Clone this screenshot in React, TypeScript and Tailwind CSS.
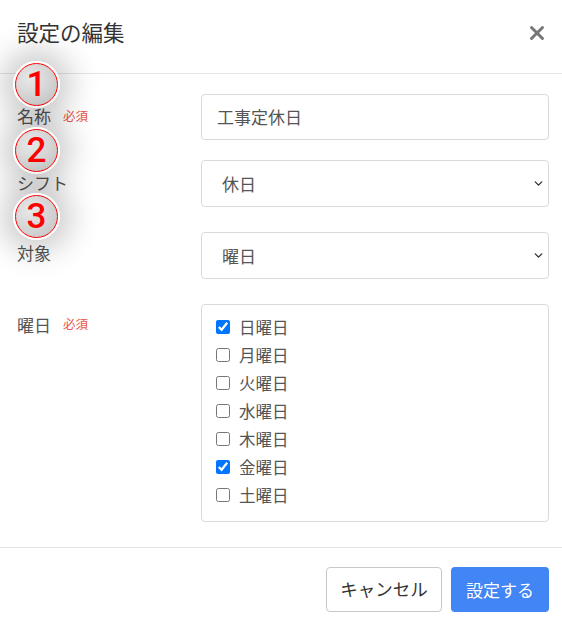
import { ChevronDown, X } from 'lucide-react'

const days = [
  { label: '日曜日', checked: true },
  { label: '月曜日', checked: false },
  { label: '火曜日', checked: false },
  { label: '水曜日', checked: false },
  { label: '木曜日', checked: false },
  { label: '金曜日', checked: true },
  { label: '土曜日', checked: false },
]

const font = { fontFamily: '"Noto Sans CJK JP", "Noto Sans", sans-serif' }

function Marker({ n, top }: { n: number; top: number }) {
  return (
    <div
      className="absolute left-[13px] w-[47px] h-[47px] rounded-full border-2 border-white shadow-[0_0_30px_12px_rgba(0,0,0,0.2)]"
      style={{ top }}
    >
      <div className="w-full h-full rounded-full border-[1.5px] border-[#ff0000] bg-[radial-gradient(circle_at_35%_35%,#e8e8e8,#c2c2c2)] flex items-center justify-center">
        <span className="text-[#ff0000] text-[35px] font-medium leading-none" style={{ fontFamily: 'Roboto, "Liberation Sans", sans-serif' }}>
          {n}
        </span>
      </div>
    </div>
  )
}

function Required() {
  return <span className="ml-[12px] text-[12.5px] text-[#e8534b]">必須</span>
}

export default function App() {
  return (
    <div className="relative w-[562px] h-[627px] bg-white" style={font}>
      {/* Header */}
      <div className="h-[74px] border-b border-[#e5e5e5] flex items-center justify-between pl-[17px] pr-[14px] pb-[8px]">
        <h1 className="text-[21.5px] text-[#333]">設定の編集</h1>
        <X className="w-[22px] h-[22px] text-[#777]" strokeWidth={3.2} />
      </div>

      {/* Body */}
      <div className="pl-[17px] pr-[13px] pt-[20px] pb-[25px] text-[17px] text-[#555]">
        <div className="flex items-center h-[46px]">
          <div className="w-[184px] flex items-center mt-[-2px]">
            名称<Required />
          </div>
          <div className="flex-1 h-full border border-[#d6dbe0] rounded-[4px] flex items-center px-[15px]">
            工事定休日
          </div>
        </div>

        <div className="flex items-center h-[47px] mt-[20px]">
          <div className="w-[184px] mt-[-2px]">シフト</div>
          <div className="flex-1 h-full border border-[#d6dbe0] rounded-[4px] flex items-center justify-between pl-[20px] pr-[3px]">
            休日
            <ChevronDown className="w-[13px] h-[13px] text-[#333]" strokeWidth={2.5} />
          </div>
        </div>

        <div className="flex items-center h-[47px] mt-[25px]">
          <div className="w-[184px] mt-[-5px]">対象</div>
          <div className="flex-1 h-full border border-[#d6dbe0] rounded-[4px] flex items-center justify-between pl-[20px] pr-[3px]">
            曜日
            <ChevronDown className="w-[13px] h-[13px] text-[#333]" strokeWidth={2.5} />
          </div>
        </div>

        <div className="flex items-start mt-[25px]">
          <div className="w-[184px] flex items-center pt-[8px]">
            曜日<Required />
          </div>
          <div className="flex-1 h-[218px] border border-[#d6dbe0] rounded-[4px] pl-[14px] pt-[8px]">
            {days.map(d => (
              <label key={d.label} className="flex items-center h-[28px] text-[16.5px]">
                <input type="checkbox" defaultChecked={d.checked} className="w-[14px] h-[14px] m-0" />
                <span className="ml-[9px]">{d.label}</span>
              </label>
            ))}
          </div>
        </div>
      </div>

      {/* Footer */}
      <div className="border-t border-[#e5e5e5] flex justify-end gap-[9px] pt-[19px] pr-[13px]">
        <button className="w-[116px] h-[45px] border border-[#c8c8c8] rounded-[4px] bg-white text-[17.5px] text-[#333]">
          キャンセル
        </button>
        <button className="w-[98px] h-[45px] rounded-[4px] bg-[#4285f4] text-[17px] text-white">
          設定する
        </button>
      </div>

      <Marker n={1} top={61} />
      <Marker n={2} top={127} />
      <Marker n={3} top={193} />
    </div>
  )
}
